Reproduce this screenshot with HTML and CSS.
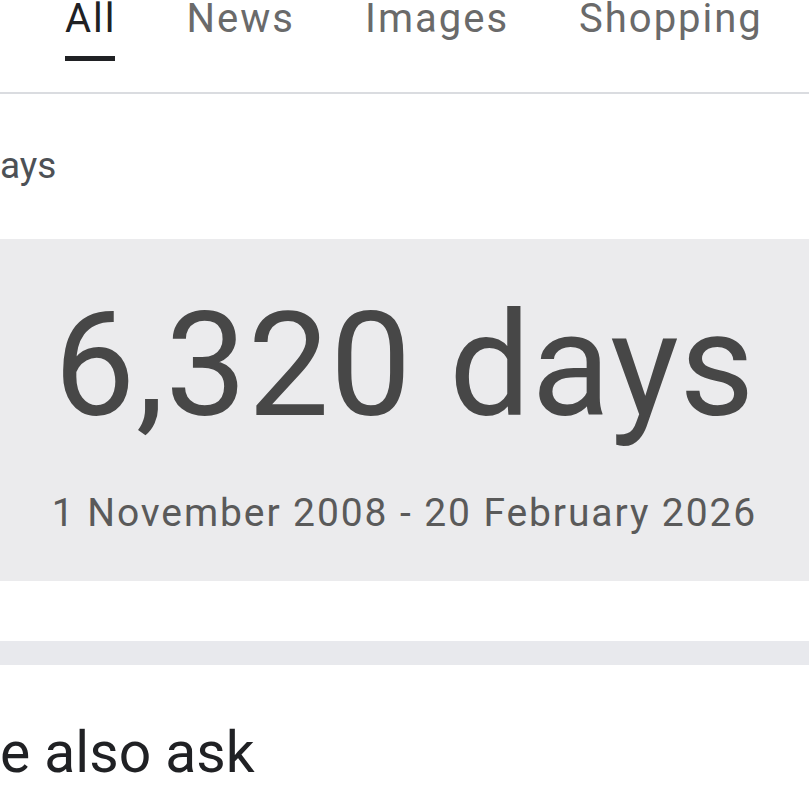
FILE: index.html
```html
<!DOCTYPE html>
<html lang="en">
<head>
<meta charset="utf-8">
<title>6,320 days</title>
<link rel="stylesheet" href="styles.css">
</head>
<body>
<nav class="tabs">
  <a class="tab active"><span class="tab-label">All</span><span class="tab-bar"></span></a>
  <a class="tab"><span class="tab-label">News</span></a>
  <a class="tab"><span class="tab-label">Images</span></a>
  <a class="tab"><span class="tab-label">Shopping</span></a>
</nav>
<main>
  <h2 class="query"><span class="cut">D</span>ays</h2>
  <section class="answer">
    <div class="result">6,320 days</div>
    <div class="range">1 November 2008 - 20 February 2026</div>
  </section>
  <div class="spacer-bar"></div>
  <h2 class="paa"><span class="cut">Peopl</span>e also ask</h2>
</main>
</body>
</html>
```

FILE: styles.css
```css
html, body {
  margin: 0;
  padding: 0;
  background: #ffffff;
  width: 809px;
  height: 790px;
  overflow: hidden;
  font-family: Roboto, "Noto Sans", "Liberation Sans", sans-serif;
}

.tabs {
  display: flex;
  gap: 72px;
  padding-left: 65px;
  height: 92px;
  border-bottom: 2px solid #dadce0;
  box-sizing: content-box;
}

.tab {
  display: flex;
  flex-direction: column;
  align-items: stretch;
  color: #6a6a6a;
  text-decoration: none;
}

.tab-label {
  font-size: 40px;
  line-height: 37px;
  letter-spacing: 2px;
  margin-right: -2px;
}

.tab.active {
  color: #202124;
}

.tab-bar {
  display: block;
  height: 5px;
  margin-top: 19px;
  background: #202124;
}

main {
  display: flex;
  flex-direction: column;
}

.cut {
  display: inline-block;
  width: 0;
  direction: rtl;
  white-space: nowrap;
}

.query {
  margin: 54px 0 0 0;
  font-size: 37px;
  line-height: 36px;
  font-weight: 400;
  color: #4d5156;
  white-space: nowrap;
}

.answer {
  margin-top: 55px;
  background: #ebebed;
  padding: 54px 0 48px;
  text-align: center;
  display: flex;
  flex-direction: column;
  align-items: center;
}

.result {
  font-size: 145px;
  line-height: 145px;
  color: #474747;
  letter-spacing: 0.8px;
  white-space: nowrap;
}

.range {
  margin-top: 56px;
  font-size: 39px;
  line-height: 39px;
  color: #5a5a5a;
  letter-spacing: 1.9px;
  white-space: nowrap;
}

.spacer-bar {
  margin-top: 60px;
  height: 24px;
  background: #e8e9ed;
}

.paa {
  margin: 59px 0 0 0;
  font-size: 57px;
  line-height: 58px;
  font-weight: 400;
  color: #202124;
  white-space: nowrap;
}
```
